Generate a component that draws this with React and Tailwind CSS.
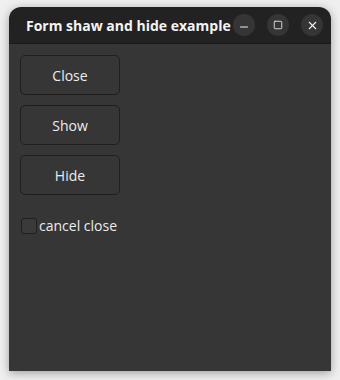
import { Minus, Square, X } from "lucide-react"

const font = { fontFamily: '"Open Sans", "DejaVu Sans", sans-serif' }

function WinButton({ children }) {
  return (
    <div className="w-[22px] h-[22px] rounded-full bg-[#353535] flex items-center justify-center text-[#f0f0f0]">
      {children}
    </div>
  )
}

function PushButton({ label }) {
  return (
    <button className="w-[100px] h-[40px] rounded-[5px] border border-[#1f1f1f] bg-[#363636] text-[#ececec] text-[14px] flex items-center justify-center">
      {label}
    </button>
  )
}

export default function App() {
  return (
    <div className="w-[340px] h-[380px] bg-[#efefef] pt-[7px] pl-[9px]" style={font}>
      <div className="w-[322px] h-[364px] rounded-t-[12px] overflow-hidden flex flex-col shadow-[0_2px_10px_rgba(0,0,0,0.35)]">
        {/* title bar */}
        <div className="h-[37px] bg-[#222222] border-b border-[#191919] flex items-center pl-[17px] pr-[8px]">
          <span className="text-[#f4f4f4] text-[14px] font-bold flex-1 whitespace-nowrap">
            Form shaw and hide example
          </span>
          <div className="flex items-center gap-[12px]">
            <WinButton><Minus size={12} strokeWidth={2} className="mt-[3px]" /></WinButton>
            <WinButton><Square size={10} strokeWidth={2} /></WinButton>
            <WinButton><X size={13} strokeWidth={2} /></WinButton>
          </div>
        </div>
        {/* content */}
        <div className="flex-1 bg-[#363636] pt-[11px] pl-[11px] flex flex-col gap-[10px]">
          <PushButton label="Close" />
          <PushButton label="Show" />
          <PushButton label="Hide" />
          <label className="flex items-center mt-[10px] text-[#ececec] text-[14px]">
            <span className="w-[16px] h-[16px] rounded-[3px] border border-[#1f1f1f] bg-[#3a3a3a] ml-[1px] mr-[2px]"></span>
            cancel close
          </label>
        </div>
      </div>
    </div>
  )
}
